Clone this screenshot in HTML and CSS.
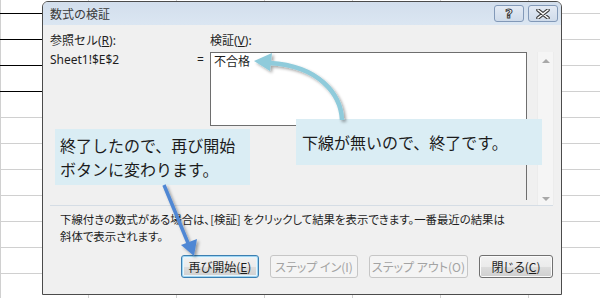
FILE: index.html
```html
<!DOCTYPE html>
<html lang="ja">
<head>
  <meta charset="UTF-8" />
  <title>数式の検証</title>
  <link rel="stylesheet" href="styles.css">
</head>
<body>

  <div class="dialog">
    <div class="titlebar">
      <span class="title">数式の検証</span>
      <div class="caption-buttons">
        <span class="cap-btn help">?</span>
        <span class="cap-btn close">
          <svg width="14" height="10" viewBox="0 0 14 10">
            <path d="M2 1 L12 9 M12 1 L2 9" stroke="#3b3b3b" stroke-width="3.6" stroke-linecap="round"/>
            <path d="M2 1 L12 9 M12 1 L2 9" stroke="#fff" stroke-width="1.6" stroke-linecap="round"/>
          </svg>
        </span>
      </div>
    </div>

    <div class="dlg-body">
      <div class="fields">
        <label class="lbl">参照セル(<u>R</u>):</label>
        <label class="lbl eval-lbl">検証(<u>V</u>):</label>
        <div class="ref-value">Sheet1!$E$2</div>
        <div class="eq">=</div>
        <div class="eval-area">
          <div class="eval-box">不合格</div>
        </div>
        <div class="scrollbar">
          <span class="arrow-up"></span>
          <span class="arrow-down"></span>
        </div>
      </div>

      <div class="sep"></div>

      <p class="note">下線付きの数式がある場合は、[検証] をクリックして結果を表示できます。一番最近の結果は<br>斜体で表示されます。</p>

      <div class="buttons">
        <button class="btn btn-default btn-restart">再び開始(<u>E</u>)</button>
        <button class="btn btn-in" disabled>ステップ イン(I)</button>
        <button class="btn btn-out" disabled>ステップ アウト(O)</button>
        <button class="btn btn-close">閉じる(<u>C</u>)</button>
      </div>
    </div>
  </div>

  <div class="callout callout-end">下線が無いので、終了です。</div>
  <div class="callout callout-restart">終了したので、再び開始<br>ボタンに変わります。</div>

  <svg class="arrows" width="600" height="298" viewBox="0 0 600 298">
    <defs>
      <filter id="shadow" x="-30%" y="-30%" width="160%" height="160%">
        <feDropShadow dx="2" dy="2" stdDeviation="1.5" flood-color="#000" flood-opacity="0.35"/>
      </filter>
    </defs>
    <g filter="url(#shadow)">
      <path d="M342 120 C341 95 320 66 270 63" fill="none" stroke="#8fcbdb" stroke-width="4.5"/>
      <polygon points="254,61 272,53 270,71" fill="#8fcbdb"/>
    </g>
    <g filter="url(#shadow)">
      <path d="M164 185 L188 243" fill="none" stroke="#4f87d4" stroke-width="3.5"/>
      <polygon points="194,256 181,245 197,239" fill="#4f87d4"/>
    </g>
  </svg>

</body>
</html>
```

FILE: styles.css
```css
html, body {
  margin: 0;
  padding: 0;
}
body {
  width: 600px;
  height: 298px;
  overflow: hidden;
  position: relative;
  font-family: "Noto Sans", "Noto Sans CJK JP", sans-serif;
  color: #1e1e1e;
  background-color: #fff;
  background-image:
    linear-gradient(to bottom, transparent 13px, #000 13px 14px, transparent 14px 39px, #000 39px 40px, transparent 40px 65px, #000 65px 66px, transparent 66px 91px, #000 91px 92px, transparent 92px),
    linear-gradient(to right, #d0d0d0 1px, transparent 1px),
    linear-gradient(to bottom, #d0d0d0 1px, transparent 1px);
  background-size: 42px 100%, 88px 100%, 100% 26px;
  background-position: 0 0, 0 0, 0 13px;
  background-repeat: no-repeat, repeat, repeat;
}

/* dialog window */
.dialog {
  position: absolute;
  left: 42px;
  top: 1px;
  width: 520px;
  height: 294px;
  box-sizing: border-box;
  border: 1px solid #4b4b4b;
  border-radius: 6px 6px 0 0;
  background: #f0f0f0;
  display: flex;
  flex-direction: column;
  overflow: hidden;
}
.titlebar {
  height: 23px;
  flex: none;
  display: flex;
  align-items: center;
  justify-content: space-between;
  padding: 0 3px 0 7px;
  background: linear-gradient(#d2deec, #dbe6f2);
}
.title {
  font-size: 12px;
  color: #3a3a3a;
  font-family: "Noto Sans CJK JP", sans-serif;
}
.caption-buttons {
  display: flex;
  gap: 4px;
  align-self: flex-start;
  margin-top: 3px;
}
.cap-btn {
  width: 30px;
  height: 17px;
  box-sizing: border-box;
  border: 1px solid #8299b8;
  border-radius: 3px;
  background: linear-gradient(#e3eaf4, #cfdbea);
  display: flex;
  align-items: center;
  justify-content: center;
}
.help {
  font-family: "DejaVu Sans", sans-serif;
  font-weight: bold;
  font-size: 13px;
  color: #fff;
  -webkit-text-stroke: 1px #3b3b3b;
  line-height: 1;
}

.dlg-body {
  flex: 1;
  padding: 8px 8px 0 7px;
  font-size: 12px;
  font-family: "Noto Sans", "Noto Sans CJK JP", sans-serif;
}

.fields {
  display: grid;
  grid-template-columns: 147px 13px 317px 27px;
  grid-template-rows: 16px 148px;
  row-gap: 3px;
  line-height: 16px;
}
.lbl {
  grid-column: 1;
}
.eval-lbl {
  grid-column: 3;
}
.ref-value {
  grid-column: 1;
}
.eq {
  grid-column: 2;
}
.eval-area {
  grid-column: 3;
  border-right: 1px solid #6e6e6e;
}
.eval-box {
  height: 74px;
  box-sizing: border-box;
  background: #fff;
  border: 1px solid #6e6e6e;
  border-right: none;
  padding: 0 3px;
  font-family: "Noto Sans CJK JP", sans-serif;
}
.scrollbar {
  grid-column: 4;
  margin-left: 10px;
  height: 153px;
  background: #f5f5f5;
  border-left: 1px solid #ececec;
  border-right: 1px solid #ececec;
  display: flex;
  flex-direction: column;
  justify-content: space-between;
  align-items: center;
  padding: 7px 0 4px;
  box-sizing: border-box;
}
.arrow-up, .arrow-down {
  width: 0;
  height: 0;
  border-left: 4px solid transparent;
  border-right: 4px solid transparent;
}
.arrow-up {
  border-bottom: 4px solid #a8a8a8;
}
.arrow-down {
  border-top: 4px solid #a8a8a8;
}

.sep {
  height: 1px;
  background: #d5dde5;
  margin-top: 5px;
}

.note {
  margin: 5px 0 0 10px;
  font-family: "Noto Sans CJK JP", sans-serif;
  font-feature-settings: "palt";
  font-size: 11.4px;
  line-height: 17px;
  color: #1e1e1e;
}

.buttons {
  display: flex;
  justify-content: flex-end;
  gap: 11px;
  margin-top: 10px;
}
.btn {
  height: 23px;
  padding: 0;
  white-space: nowrap;
  font-family: "Noto Sans CJK JP", sans-serif;
  font-feature-settings: "palt";
  font-size: 12px;
  color: #1e1e1e;
  border: 1px solid #707070;
  border-radius: 3px;
  background: linear-gradient(#f2f2f2 0%, #ebebeb 50%, #dddddd 51%, #cfcfcf 100%);
  box-shadow: inset 0 0 0 1px #fbfbfb;
}
.btn-default {
  border-color: #3c7fb1;
  box-shadow: inset 0 0 0 1px #9fd5f2, inset 0 0 0 2px #e8f5fc;
}
.btn:disabled {
  color: #a3a3a3;
  border-color: #c6c6c6;
  background: #f4f4f4;
  box-shadow: none;
}
.btn-restart { width: 78px; }
.btn-in { width: 88px; }
.btn-out { width: 99px; }
.btn-close { width: 74px; }

/* explanatory notes laid over the screenshot */
.callout {
  position: absolute;
  background: #daedf4;
  font-family: "Noto Sans CJK JP", sans-serif;
  font-size: 16px;
  color: #1c1c1c;
  box-sizing: border-box;
}
.callout-end {
  left: 296px;
  top: 119px;
  width: 246px;
  height: 46px;
  padding: 0 6px;
  line-height: 46px;
}
.callout-restart {
  left: 55px;
  top: 129px;
  width: 195px;
  height: 56px;
  padding: 4px 5px;
  line-height: 24px;
}

.arrows {
  position: absolute;
  left: 0;
  top: 0;
  pointer-events: none;
}
```
